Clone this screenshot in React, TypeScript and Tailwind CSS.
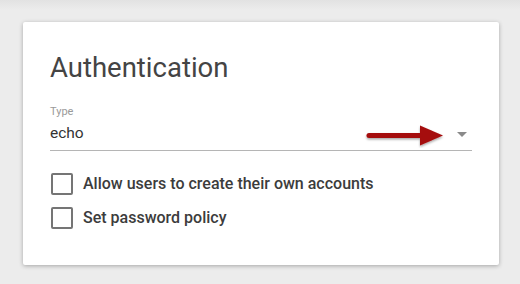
import React, { useState } from 'react';

function RedArrow() {
  return <svg width="84" height="24" viewBox="0 0 84 24" className="absolute left-[314px] top-[6px]">
      <defs>
        <filter id="sh" x="-10%" y="-50%" width="120%" height="200%">
          <feDropShadow dx="0" dy="1.5" stdDeviation="1.2" floodColor="#000" floodOpacity="0.35" />
        </filter>
      </defs>
      <g filter="url(#sh)">
        <path d="M5 11.5 L60 11.5" stroke="#a50d0d" strokeWidth="5" strokeLinecap="round" />
        <path d="M56 1.5 L79 11.5 L56 21.5 Z" fill="#a50d0d" />
      </g>
    </svg>;
}

function Checkbox({ label }: { label: string }) {
  const [checked, setChecked] = useState(false);
  return <label className="flex items-center gap-[10px] cursor-pointer">
      <span onClick={() => setChecked(!checked)} className="w-[22px] h-[22px] rounded-[2px] border-2 border-[#757575] bg-white flex items-center justify-center">
        {checked && <span className="w-[10px] h-[10px] bg-[#757575]" />}
      </span>
      <span className="text-[16px] leading-[22px] font-medium text-[#3c3c3c]">{label}</span>
    </label>;
}

export default function App() {
  return <div className="w-[520px] h-[284px] bg-[linear-gradient(#e2e2e2,#ececec_10px)] pt-[22px] pl-[23px]" style={{ fontFamily: 'Roboto, "Liberation Sans", sans-serif' }}>
      <div className="w-[476px] h-[243px] bg-white rounded-[2px] shadow-[0_1px_4px_rgba(0,0,0,0.3)] px-[27px] pt-[30px]">
        <h1 className="text-[27.5px] leading-[32px] text-[#444] font-normal">Authentication</h1>
        <div className="mt-[22px] w-[422px]">
          <div className="text-[11px] leading-[12px] text-[#9a9a9a]">Type</div>
          <div className="relative flex items-center justify-between h-[33px] border-b-[1.5px] border-[#b5b5b5]">
            <span className="text-[15.5px] text-[#333]">echo</span>
            <RedArrow />
            <svg width="10" height="5" viewBox="0 0 10 5" className="mr-[5px]">
              <path d="M0 0 L10 0 L5 5 Z" fill="#8a8a8a" />
            </svg>
          </div>
        </div>
        <div className="mt-[22px] flex flex-col gap-[12px] ml-[1px]">
          <Checkbox label="Allow users to create their own accounts" />
          <Checkbox label="Set password policy" />
        </div>
      </div>
    </div>;
}
